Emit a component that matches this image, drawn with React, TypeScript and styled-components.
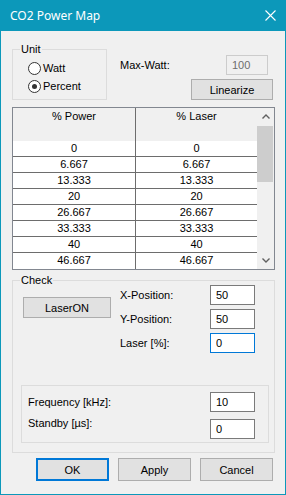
import styled, { createGlobalStyle } from "styled-components";

const ACCENT = "#0c98ba";
const GRID_LINE = "#6d6d6d";

const rows = ["0", "6.667", "13.333", "20", "26.667", "33.333", "40", "46.667"];

export default function App() {
  return (
    <>
      <GlobalStyle />
      <Window>
        <TitleBar>
          <span>CO2 Power Map</span>
          <CloseIcon width="11" height="11" viewBox="0 0 11 11">
            <path d="M0.5 0.5 L10.5 10.5 M10.5 0.5 L0.5 10.5" stroke="#fff" strokeWidth="1.1" />
          </CloseIcon>
        </TitleBar>
        <Body>
          <TopRow>
            <GroupBox $width="95px">
              <Legend>Unit</Legend>
              <RadioList>
                <RadioRow>
                  <RadioCircle $checked={false} />
                  <span>Watt</span>
                </RadioRow>
                <RadioRow>
                  <RadioCircle $checked />
                  <span>Percent</span>
                </RadioRow>
              </RadioList>
            </GroupBox>
            <RightColumn>
              <MaxRow>
                <span>Max-Watt:</span>
                <TextBox $width="42px" $disabled value="100" readOnly />
              </MaxRow>
              <LinearizeButton>Linearize</LinearizeButton>
            </RightColumn>
          </TopRow>

          <GridView>
            <GridCells>
              <GridRow $header>
                <Cell $first $header>% Power</Cell>
                <Cell $header>% Laser</Cell>
              </GridRow>
              {rows.map((r, i) => (
                <GridRow key={r} $last={i === rows.length - 1}>
                  <Cell $first>{r}</Cell>
                  <Cell>{r}</Cell>
                </GridRow>
              ))}
            </GridCells>
            <ScrollBar>
              <ScrollArrow>
                <svg width="8" height="5" viewBox="0 0 8 5">
                  <path d="M0.5 4.5 L4 1 L7.5 4.5" fill="none" stroke="#606060" strokeWidth="1.4" />
                </svg>
              </ScrollArrow>
              <ScrollThumb />
              <ScrollSpacer />
              <ScrollArrow>
                <svg width="8" height="5" viewBox="0 0 8 5">
                  <path d="M0.5 0.5 L4 4 L7.5 0.5" fill="none" stroke="#606060" strokeWidth="1.4" />
                </svg>
              </ScrollArrow>
            </ScrollBar>
          </GridView>

          <CheckBox>
            <Legend>Check</Legend>
            <CheckBody>
              <CheckGrid>
                <LaserButton>LaserON</LaserButton>
                <FieldLabel>X-Position:</FieldLabel>
                <TextBox $width="45px" value="50" readOnly />
                <FieldLabel>Y-Position:</FieldLabel>
                <TextBox $width="45px" value="50" readOnly />
                <Spacer />
                <FieldLabel>Laser [%]:</FieldLabel>
                <TextBox $width="45px" $focused value="0" readOnly />
              </CheckGrid>
              <SubGroup>
                <SubLabel $top="4px">Frequency [kHz]:</SubLabel>
                <TextBox $width="45px" value="10" readOnly />
                <SubLabel $top="-2px">Standby [µs]:</SubLabel>
                <TextBox $width="45px" value="0" readOnly />
              </SubGroup>
            </CheckBody>
          </CheckBox>

          <ButtonRow>
            <DialogButton $default>OK</DialogButton>
            <DialogButton>Apply</DialogButton>
            <DialogButton>Cancel</DialogButton>
          </ButtonRow>
        </Body>
      </Window>
    </>
  );
}

const GlobalStyle = createGlobalStyle`
  * { box-sizing: border-box; }
  html, body { margin: 0; padding: 0; background: #f0f0f0; }
  body {
    font-family: "Liberation Sans", Arial, sans-serif;
    font-size: 11px;
    color: #000;
  }
`;

const Window = styled.div`
  width: 286px;
  height: 495px;
  border: 1px solid ${ACCENT};
  border-top: none;
  background: #f0f0f0;
  display: flex;
  flex-direction: column;
`;

const TitleBar = styled.div`
  height: 31px;
  background: ${ACCENT};
  display: flex;
  align-items: center;
  justify-content: space-between;
  padding: 0 9px 1px 9px;
  color: #fff;
  font-family: "Noto Sans", "Open Sans", sans-serif;
  font-size: 12px;
`;

const CloseIcon = styled.svg`
  margin-right: 0;
`;

const Body = styled.div`
  padding: 12px 10px 0 11px;
  display: flex;
  flex-direction: column;
`;

const TopRow = styled.div`
  display: flex;
  gap: 13px;
`;

const GroupBox = styled.fieldset<{ $width?: string }>`
  margin: 0;
  padding: 0;
  min-width: 0;
  width: ${(p) => p.$width || "auto"};
  border: 1px solid #dcdcdc;
`;

const Legend = styled.legend`
  margin-left: 7px;
  padding: 0 1px;
  font-size: 11px;
  line-height: 12px;
`;

const RadioList = styled.div`
  padding: 4px 0 4px 15px;
  display: flex;
  flex-direction: column;
`;

const RadioRow = styled.label`
  height: 18px;
  display: flex;
  align-items: center;
  gap: 2px;
`;

const RadioCircle = styled.span<{ $checked: boolean }>`
  width: 13px;
  height: 13px;
  border-radius: 50%;
  border: 1px solid #333;
  background: #fff;
  display: flex;
  align-items: center;
  justify-content: center;
  &::after {
    content: "";
    width: 5px;
    height: 5px;
    border-radius: 50%;
    background: ${(p) => (p.$checked ? "#333" : "transparent")};
  }
`;

const RightColumn = styled.div`
  flex: 1;
  display: flex;
  flex-direction: column;
`;

const MaxRow = styled.div`
  margin-top: 12px;
  display: flex;
  align-items: center;
  justify-content: space-between;
  padding-right: 7px;
`;

const TextBox = styled.input<{ $width: string; $disabled?: boolean; $focused?: boolean }>`
  width: ${(p) => p.$width};
  height: 20px;
  margin: 0;
  padding: 0 0 0 5px;
  font-family: "Liberation Sans", Arial, sans-serif;
  font-size: 11px;
  outline: none;
  border: 1px solid
    ${(p) => (p.$focused ? "#0078d7" : p.$disabled ? "#cccccc" : "#7a7a7a")};
  background: ${(p) => (p.$disabled ? "#f0f0f0" : "#fff")};
  color: ${(p) => (p.$disabled ? "#6d6d6d" : "#000")};
`;

const PushButton = styled.button`
  margin: 0;
  padding: 0;
  font-family: "Liberation Sans", Arial, sans-serif;
  font-size: 11px;
  color: #000;
  background: #e1e1e1;
  border: 1px solid #adadad;
`;

const LinearizeButton = styled(PushButton)`
  align-self: flex-end;
  width: 82px;
  height: 21px;
  margin: 4px 2px 0 0;
`;

const GridView = styled.div`
  margin-top: 7px;
  height: 163px;
  border: 1px solid #828790;
  background: #fff;
  display: flex;
`;

const GridCells = styled.div`
  width: 244px;
  display: flex;
  flex-direction: column;
`;

const GridRow = styled.div<{ $header?: boolean; $last?: boolean }>`
  display: grid;
  grid-template-columns: 123px 121px;
  height: ${(p) => (p.$header ? "33px" : "16px")};
  border-bottom: ${(p) => (p.$header || p.$last ? "none" : `1px solid ${GRID_LINE}`)};
  background: ${(p) => (p.$header ? "#f0f0f0" : "#fff")};
`;

const Cell = styled.div<{ $first?: boolean; $header?: boolean }>`
  border-right: ${(p) => (p.$first ? `1px solid ${GRID_LINE}` : "none")};
  text-align: center;
  line-height: ${(p) => (p.$header ? "13px" : "15px")};
  padding-top: ${(p) => (p.$header ? "2px" : "0")};
`;

const ScrollBar = styled.div`
  width: 17px;
  background: #f0f0f0;
  display: flex;
  flex-direction: column;
`;

const ScrollArrow = styled.div`
  height: 17px;
  display: flex;
  align-items: center;
  justify-content: center;
`;

const ScrollThumb = styled.div`
  margin: 1px 1px 0 0;
  height: 56px;
  background: #cdcdcd;
`;

const ScrollSpacer = styled.div`
  flex: 1;
`;

const CheckBox = styled(GroupBox)`
  margin-top: 4px;
`;

const CheckBody = styled.div`
  padding: 0 5px 9px 8px;
  display: flex;
  flex-direction: column;
`;

const CheckGrid = styled.div`
  margin: -1px 0 0 2px;
  display: grid;
  grid-template-columns: 97px 90px 45px;
  grid-template-rows: 20px 20px 20px;
  row-gap: 4px;
  align-items: center;
`;

const LaserButton = styled(PushButton)`
  grid-row: 1 / span 2;
  align-self: start;
  width: 88px;
  height: 21px;
  margin-top: 12px;
`;

const Spacer = styled.div``;

const FieldLabel = styled.span`
  line-height: 13px;
`;

const SubGroup = styled.div`
  margin-top: 32px;
  border: 1px solid #dcdcdc;
  padding: 6px 13px 3px 6px;
  display: grid;
  grid-template-columns: 1fr 45px;
  grid-template-rows: 20px 20px;
  row-gap: 7px;
`;

const SubLabel = styled.span<{ $top: string }>`
  align-self: start;
  line-height: 13px;
  margin-top: ${(p) => p.$top};
`;

const ButtonRow = styled.div`
  margin: 5px 2px 0 0;
  display: flex;
  justify-content: flex-end;
  gap: 9px;
`;

const DialogButton = styled(PushButton)<{ $default?: boolean }>`
  width: 73px;
  height: 23px;
  border: ${(p) => (p.$default ? "2px solid #0078d7" : "1px solid #adadad")};
`;
